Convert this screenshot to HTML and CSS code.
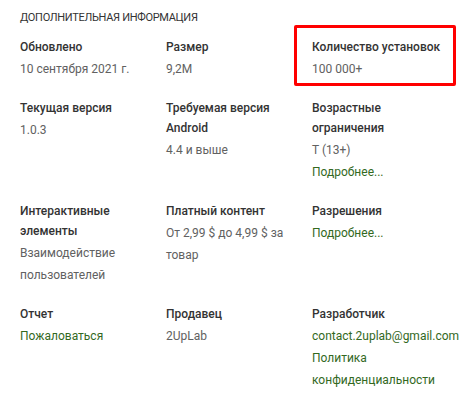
FILE: index.html
```html
<!DOCTYPE html>
<html lang="ru">
<head>
<meta charset="utf-8">
<link rel="stylesheet" href="styles.css">
</head>
<body>
<section class="info">
  <h2 class="title">Дополнительная информация</h2>
  <div class="grid">
    <div class="item">
      <div class="label">Обновлено</div>
      <div class="value">10 сентября 2021 г.</div>
    </div>
    <div class="item">
      <div class="label">Размер</div>
      <div class="value">9,2M</div>
    </div>
    <div class="item">
      <div class="label">Количество установок</div>
      <div class="value">100 000+</div>
      <div class="highlight"></div>
    </div>

    <div class="item">
      <div class="label">Текущая версия</div>
      <div class="value">1.0.3</div>
    </div>
    <div class="item">
      <div class="label">Требуемая версия Android</div>
      <div class="value">4.4 и выше</div>
    </div>
    <div class="item">
      <div class="label">Возрастные ограничения</div>
      <div class="value">T (13+)</div>
      <div class="value"><a class="link" href="#">Подробнее...</a></div>
    </div>

    <div class="item">
      <div class="label">Интерактивные элементы</div>
      <div class="value">Взаимодействие пользователей</div>
    </div>
    <div class="item">
      <div class="label">Платный контент</div>
      <div class="value">От 2,99 $ до 4,99 $ за товар</div>
    </div>
    <div class="item">
      <div class="label">Разрешения</div>
      <div class="value"><a class="link" href="#">Подробнее...</a></div>
    </div>

    <div class="item">
      <div class="label">Отчет</div>
      <div class="value"><a class="link" href="#">Пожаловаться</a></div>
    </div>
    <div class="item">
      <div class="label">Продавец</div>
      <div class="value">2UpLab</div>
    </div>
    <div class="item">
      <div class="label">Разработчик</div>
      <div class="value"><a class="link" href="#">contact.2uplab@gmail.com</a></div>
      <div class="value"><a class="link" href="#">Политика конфиденциальности</a></div>
    </div>
  </div>
</section>
</body>
</html>
```

FILE: styles.css
```css
html, body {
  margin: 0;
  padding: 0;
  background: #ffffff;
}

body {
  font-family: Roboto, "Noto Sans", sans-serif;
  font-size: 12px;
  color: #333333;
}

.info {
  padding: 8px 0 0 20px;
}

.title {
  margin: 0;
  font-size: 11px;
  font-weight: 400;
  letter-spacing: -0.3px;
  line-height: 20px;
  text-transform: uppercase;
  color: #333333;
}

.grid {
  margin-top: 9px;
  display: grid;
  grid-template-columns: repeat(3, 146px);
  row-gap: 18px;
}

.item {
  position: relative;
  padding-right: 12px;
}

.label {
  font-weight: 500;
  line-height: 20px;
  color: #333333;
  margin-bottom: 1px;
}

.value {
  line-height: 22px;
  color: #616161;
}

.link {
  color: #33691e;
  text-decoration: none;
}

.highlight {
  position: absolute;
  left: -18px;
  top: -12px;
  width: 162px;
  height: 61px;
  box-sizing: border-box;
  border: 3px solid #ff0000;
  border-radius: 2px;
}
```
